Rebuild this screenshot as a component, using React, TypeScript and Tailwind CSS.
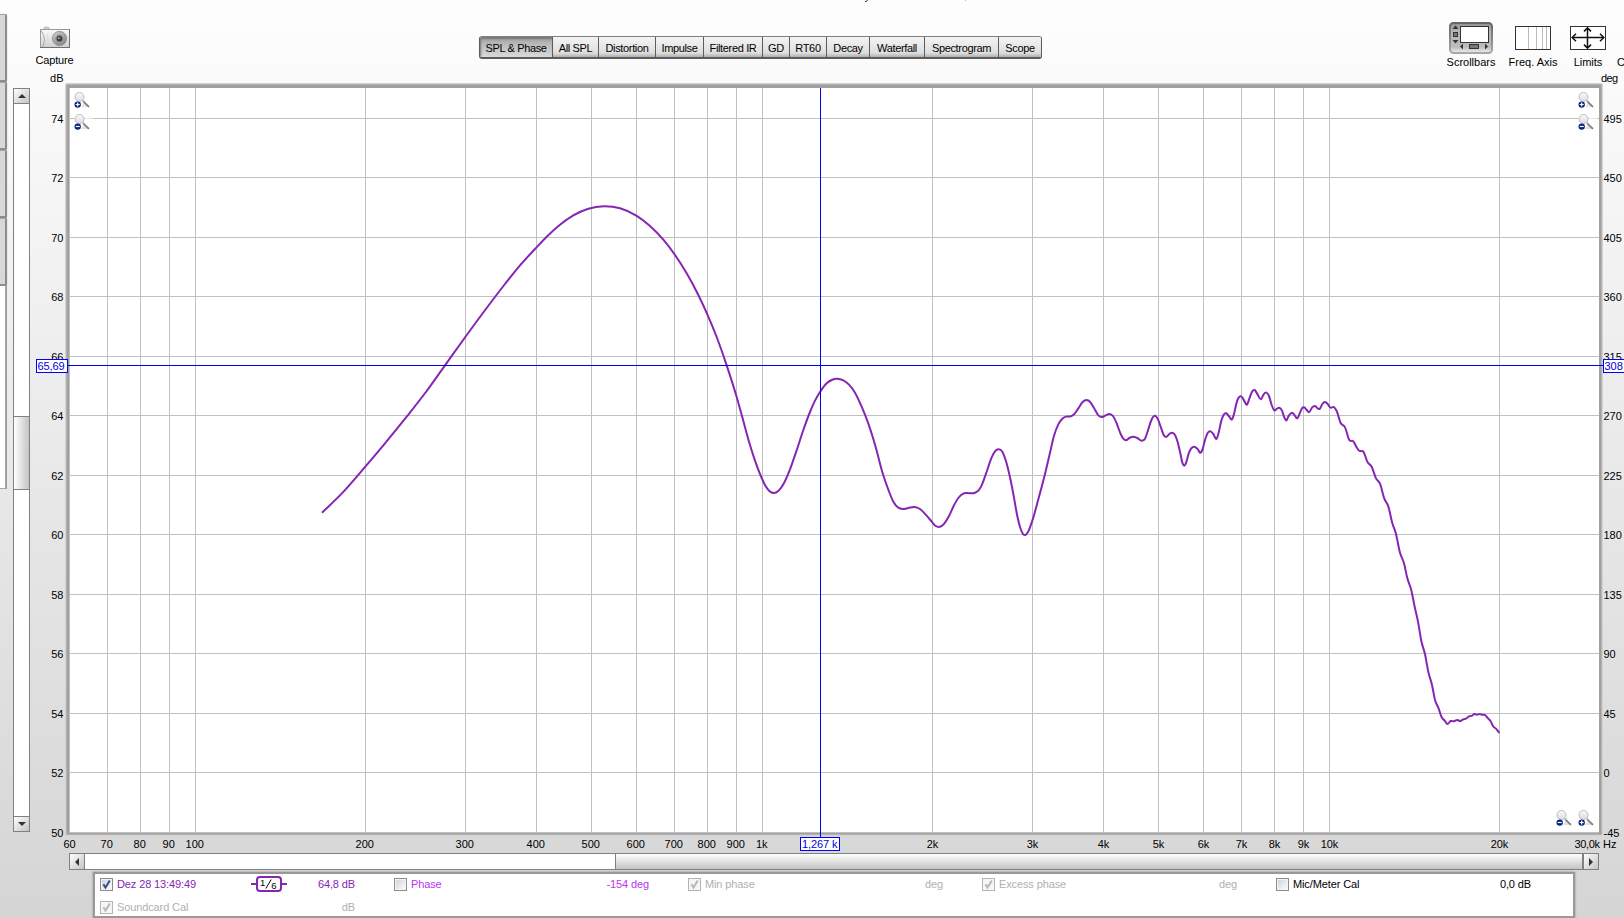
import { clsx } from 'clsx';

const FONT = "font-['Liberation_Sans',Arial,sans-serif]";

const tabs = [
  { label: 'SPL & Phase', width: 'w-[72px]' },
  { label: 'All SPL', width: 'w-[46px]' },
  { label: 'Distortion', width: 'w-[57px]' },
  { label: 'Impulse', width: 'w-[48px]' },
  { label: 'Filtered IR', width: 'w-[59px]' },
  { label: 'GD', width: 'w-[27px]' },
  { label: 'RT60', width: 'w-[37px]' },
  { label: 'Decay', width: 'w-[43px]' },
  { label: 'Waterfall', width: 'w-[55px]' },
  { label: 'Spectrogram', width: 'w-[74px]' },
  { label: 'Scope', width: 'w-[43px]' },
];

// Log frequency axis, 60 Hz to 30 kHz
const freqX = (hz: number) => Math.floor(69.5 + (Math.log(hz / 60) / Math.log(500)) * 1530);
const splY = (db: number) => Math.floor(832 - (db - 50) * 29.75);

const freqs = [
  70, 80, 90, 100, 200, 300, 400, 500, 600, 700, 800, 900, 1000, 2000, 3000, 4000, 5000, 6000, 7000,
  8000, 9000, 10000, 20000,
];
const levels = [74, 72, 70, 68, 66, 64, 62, 60, 58, 56, 54, 52, 50];

const freqLabel = (hz: number) => (hz >= 1000 ? `${hz / 1000}k` : `${hz}`);

// Trace samples in thirds of a pixel, each chunk relative to its own origin
const traceChunks = [
  {
    x: 300,
    y: 180,
    pts: '66,998 125,941 196,860 255,790 320,710 380,633 435,556 496,471 560,384 615,312 655,262 705,207 740,170 780,134 820,106 865,86 912,79 960,85 1009,107 1050,138 1090,179 1123,222 1160,280 1195,345 1222,403 1250,471 1280,556',
  },
  {
    x: 700,
    y: 330,
    pts: '110,201 127,262 150,345 165,392 182,437 195,465 208,483 221,489 235,483 250,463 270,418 290,361 310,300 330,246 345,212 362,183 380,160 395,150 412,146 430,151 447,164 465,188 485,230 505,281 527,351 548,430 565,479 580,515 595,533 608,537 625,534 643,531 660,537 680,557 697,577 707,588 716,591 728,586 745,562 760,530 775,504 790,491 800,489 823,489 835,482 845,466 857,434 875,382 885,364 896,358 907,365 918,394 930,442 942,503 952,559 962,597 970,613 976,615 984,606',
  },
  {
    x: 1020,
    y: 360,
    pts: '37,482 55,418 74,346 90,278 102,227 115,193 127,176 138,170 152,169 163,162 175,145 188,126 200,120 210,125 222,144 235,166 247,171 257,166 268,162 279,168 290,190 302,222 310,236 318,241 328,234 340,230 352,234 365,242 375,236 383,214 393,183 399,171 405,167 414,178 424,206 431,225 438,231 447,223 456,218 465,225 473,246 481,280 487,308 492,317 498,309 505,284 513,266 522,260 532,266 542,278 547,270 555,240 563,219 571,214 580,222 590,236 595,222 604,182 611,164 619,160 628,170 636,178 642,162 650,127 656,113 664,109 672,121 681,134 688,116 696,95 704,90 713,104 723,118 731,103 739,98 747,108 755,135 763,151 771,146 778,143 786,152 792,170 798,181 807,166 816,158 824,166 832,175 840,158 846,145 852,142 860,150 867,157 876,143 885,138 892,144 899,147 907,132 915,126 923,132 930,142 943,142 950,153 962,189 975,202 988,240 1000,244 1010,262 1017,272 1030,275 1043,307',
  },
  {
    x: 1300,
    y: 390,
    pts: '215,230 228,265 240,281 253,326 265,349 277,400 287,428 300,488 312,520 322,565 333,597 345,655 354,695 364,753 375,793 386,850 396,885 405,930 415,953 425,982 434,992 442,1002 452,993 462,994 471,990 481,993 490,988 498,986 507,979 516,977 523,972 531,974 538,972 546,974 555,975 562,983 572,994 579,1008 590,1018 598,1029',
  },
];

const tracePoints = traceChunks.flatMap((c) =>
  c.pts.split(' ').map((p) => {
    const [x, y] = p.split(',').map(Number);
    return [c.x + x / 3, c.y + y / 3];
  })
);

// Slope at a sample: neighbour slopes weighted by distance
const slopes = tracePoints.map((p, i, all) => {
  const prev = all[i - 1];
  const next = all[i + 1];
  if (!prev) return (next[1] - p[1]) / (next[0] - p[0]);
  if (!next) return (p[1] - prev[1]) / (p[0] - prev[0]);
  const h0 = p[0] - prev[0];
  const h1 = next[0] - p[0];
  return (((p[1] - prev[1]) / h0) * h1 + ((next[1] - p[1]) / h1) * h0) / (h0 + h1);
});

const tracePath = tracePoints.reduce((d, p, i, all) => {
  if (i === 0) return `M${p[0]} ${p[1]}`;
  const a = all[i - 1];
  const h = (p[0] - a[0]) / 3;
  const c1 = `${(a[0] + h).toFixed(2)} ${(a[1] + h * slopes[i - 1]).toFixed(2)}`;
  const c2 = `${(p[0] - h).toFixed(2)} ${(p[1] - h * slopes[i]).toFixed(2)}`;
  return `${d}C${c1} ${c2} ${p[0].toFixed(2)} ${p[1].toFixed(2)}`;
}, '');

const CameraIcon = () => (
  <svg width="32" height="24" viewBox="0 0 32 24">
    <defs>
      <linearGradient id="camBody" x1="0" y1="0" x2="0" y2="1">
        <stop offset="0" stopColor="#fafafa" />
        <stop offset="1" stopColor="#cfcfcf" />
      </linearGradient>
      <radialGradient id="camLens" cx="0.4" cy="0.35" r="0.7">
        <stop offset="0" stopColor="#e2e2e2" />
        <stop offset="1" stopColor="#7c7c7c" />
      </radialGradient>
    </defs>
    <path d="M5 4V2.6Q7.5 1 10 2.6V4z" fill="#ddd" stroke="#aaa" strokeWidth="0.7" />
    <rect x="1.5" y="4.5" width="29" height="18" fill="url(#camBody)" stroke="#9a9a9a" />
    <path d="M1 22.5h29.5V4.5" fill="none" stroke="#6e6e6e" />
    <path d="M2 5.5Q8 13.5 3.5 22" fill="none" stroke="#aaa" />
    <path d="M8.5 9v8" stroke="#ddd" />
    <circle cx="20.5" cy="13.5" r="7.2" fill="url(#camLens)" stroke="#949494" strokeWidth="0.8" />
    <circle cx="20.5" cy="13.7" r="4.6" fill="#9a9a9a" />
    <circle cx="20.5" cy="13.7" r="2.9" fill="#3c4046" />
    <circle cx="19.9" cy="13.2" r="0.9" fill="#b8c4cc" />
  </svg>
);

const ScrollbarsIcon = () => (
  <svg width="44" height="32" viewBox="0 0 44 32">
    <defs>
      <linearGradient id="pressed" x1="0" y1="0" x2="0" y2="1">
        <stop offset="0" stopColor="#8f8f8f" />
        <stop offset="0.25" stopColor="#b5b5b5" />
        <stop offset="0.8" stopColor="#bdbdbd" />
        <stop offset="1" stopColor="#f0f0f0" />
      </linearGradient>
      <linearGradient id="pressedEdge" x1="0" y1="0" x2="0" y2="1">
        <stop offset="0" stopColor="#666" />
        <stop offset="1" stopColor="#a8a8a8" />
      </linearGradient>
    </defs>
    <rect x="1" y="1" width="42" height="30" rx="3.5" fill="url(#pressed)" stroke="url(#pressedEdge)" strokeWidth="2" />
    <rect x="11.5" y="4.5" width="28" height="16" fill="#fff" stroke="#333" />
    <path d="M6.5 3.5L9.5 7h-6zM6.5 21.5l3-3.5h-6zM11 24.5l3-3v6zM39 24.5l-3-3v6z" fill="#333" />
    <rect x="4.5" y="10.5" width="4" height="4" fill="#777" stroke="#333" />
    <rect x="20.5" y="22.5" width="9" height="4" fill="#777" stroke="#333" />
  </svg>
);

const FreqAxisIcon = () => (
  <svg width="36" height="24" viewBox="0 0 36 24">
    <rect x="0.5" y="0.5" width="35" height="23" fill="#fff" stroke="#333" />
    <path d="M13.5 1v22M21.5 1v22M27.5 1v22M31.5 1v22" stroke="#bbb" />
  </svg>
);

const LimitsIcon = () => (
  <svg width="36" height="24" viewBox="0 0 36 24">
    <rect x="0.5" y="0.5" width="35" height="23" fill="#fff" stroke="#333" />
    <g fill="none" stroke="#111" strokeWidth="1.5">
      <path d="M2 11.5h32M17.5 2v20" />
      <path d="M6 7.8L2.2 11.5L6 15.2M30 7.8l3.8 3.7L30 15.2M14 5.4l3.5-3.5L21 5.4M14 18.6l3.5 3.5L21 18.6" />
    </g>
  </svg>
);

const Magnifier = ({ x, y, plus }: { x: number; y: number; plus?: boolean }) => (
  <g transform={`translate(${x} ${y})`}>
    <rect x="0" y="0.5" width="19" height="16" fill="#fff" opacity="0.6" />
    <path d="M7 16l8.5.2L10 11z" fill="#e4e4e4" />
    <circle cx="5.5" cy="6" r="4.5" fill="url(#lens)" stroke="#bcbcc2" strokeWidth="1" />
    <path d="M9.2 10.3L15 15.8" stroke="#7c7c7c" strokeWidth="1.7" />
    <path d="M9 9.6l1.6 1.4" stroke="#aaa" strokeWidth="1.8" />
    <circle cx="3.7" cy="13.6" r="3.2" fill="#06267f" />
    <path d={plus ? 'M1.7 13.5h4M3.7 11.5v4' : 'M1.7 13.5h4'} stroke="#fff" strokeWidth="1.2" />
  </g>
);

const Graph = () => (
  <svg width="1594" height="783" viewBox="30 70 1594 783" className={clsx(FONT, 'shrink-0 text-[11px]')}>
    <defs>
      <linearGradient id="lens" x1="0" y1="0" x2="0" y2="1">
        <stop offset="0" stopColor="#fafafa" />
        <stop offset="1" stopColor="#dcdce2" />
      </linearGradient>
    </defs>

    <rect x="65" y="83" width="1538" height="753" rx="2" fill="#d2d2d2" />
    <rect x="66" y="84" width="1536" height="751" rx="1" fill="#b4b4b4" />
    <rect x="67" y="85" width="1534" height="749" fill="#a0a0a0" />
    <rect x="70" y="88" width="1529" height="744" fill="#fff" />

    <g fill="#c0c0c0">
      <rect x="69" y="88" width="1" height="745" />
      {freqs.map((hz) => (
        <rect key={hz} x={freqX(hz)} y="88" width="1" height="744" />
      ))}
      {levels.map((db) => (
        <rect key={db} x="70" y={splY(db)} width="1529" height="1" />
      ))}
    </g>

    {/* Axis labels */}
    <g fill="#000">
      <text x="63.5" y="82" textAnchor="end">dB</text>
      <text x="1601" y="82" textLength="17">deg</text>
      {levels.map((db, i) => (
        <g key={db}>
          <text x="63.5" y={splY(db) + 5} textAnchor="end">{db}</text>
          <text x="1603.5" y={splY(db) + 5}>{495 - i * 45}</text>
        </g>
      ))}
      <g textAnchor="middle">
        <text x="69.5" y="848">60</text>
        {freqs.map((hz) => (
          <text key={hz} x={freqX(hz) + (hz > 1000 ? 0.5 : -0.3)} y="848">{freqLabel(hz)}</text>
        ))}
      </g>
      <text x="1574.5" y="848" textLength="25.5">30,0k</text>
      <text x="1603" y="848">Hz</text>
    </g>

    <path d={tracePath} fill="none" stroke="#8526b3" strokeWidth="2" strokeLinejoin="round" />

    {/* Cursor */}
    <g fill="#0000ee">
      <rect x="68" y="365" width="1535" height="1" />
      <rect x="820" y="88" width="1" height="749" />
    </g>
    <g fill="#fff" stroke="#0000ff">
      <rect x="36.5" y="359.5" width="31" height="13" />
      <rect x="800.5" y="837.5" width="39" height="13" />
      <rect x="1603.5" y="359.5" width="31" height="13" />
    </g>
    <g fill="#0000e0">
      <text x="37.5" y="370" textLength="27">65,69</text>
      <text x="802" y="848" textLength="35.5">1,267 k</text>
      <text x="1604.5" y="370">308</text>
    </g>

    <Magnifier x={74} y={91} plus />
    <Magnifier x={74} y={113} />
    <Magnifier x={1578} y={91} plus />
    <Magnifier x={1578} y={113} />
    <Magnifier x={1556} y={809} />
    <Magnifier x={1578} y={809} plus />
  </svg>
);

const Arrow = ({ dir }: { dir: 'up' | 'down' | 'left' | 'right' }) => {
  const shapes = { up: 'M0 6L4 2l4 4z', down: 'M0 2h8L4 6z', left: 'M6 0v8L2 4z', right: 'M2 0v8l4-4z' };
  return (
    <svg width="8" height="8" viewBox="0 0 8 8">
      <path d={shapes[dir]} fill="#333" />
    </svg>
  );
};

const VScroll = () => (
  <div className="mt-[18px] flex h-[744px] w-[17px] shrink-0 flex-col border border-[#808080] bg-white">
    <div className="flex h-[15px] items-center justify-center border-b border-[#808080] bg-gradient-to-br from-white to-[#c4c4c4]">
      <Arrow dir="up" />
    </div>
    <div className="h-[312px]" />
    <div className="h-[74px] border-y border-[#808080] bg-gradient-to-r from-white to-[#c4c4c4]" />
    <div className="grow" />
    <div className="flex h-[15px] items-center justify-center border-t border-[#808080] bg-gradient-to-br from-white to-[#c4c4c4]">
      <Arrow dir="down" />
    </div>
  </div>
);

const HScroll = () => (
  <div className="ml-[56px] flex h-[17px] w-[1530px] shrink-0 border border-[#808080] bg-white">
    <div className="flex w-[15px] items-center justify-center border-r border-[#808080] bg-gradient-to-br from-white to-[#c4c4c4]">
      <Arrow dir="left" />
    </div>
    <div className="w-[530px]" />
    <div className="grow border-x border-[#808080] bg-gradient-to-b from-white to-[#c4c4c4]" />
    <div className="flex w-[15px] items-center justify-center border-l border-[#808080] bg-gradient-to-br from-white to-[#c4c4c4]">
      <Arrow dir="right" />
    </div>
  </div>
);

interface TraceItemProps {
  name: string;
  value: string;
  color: string;
  checked?: boolean;
  disabled?: boolean;
  smoothing?: boolean;
}

const TraceItem = ({ name, value, color, checked, disabled, smoothing }: TraceItemProps) => (
  <div className={clsx('flex h-4 w-[255px] items-center', color)}>
    <span
      className={clsx(
        'flex size-[13px] shrink-0 items-center justify-center border',
        disabled
          ? 'border-[#b4b4b4] bg-[#f6f6f6]'
          : 'border-[#8c8c8c] bg-gradient-to-br from-[#cdd1d6] to-white shadow-[inset_0_0_0_1px_#f4f4f4]'
      )}
    >
      {checked && (
        <svg width="11" height="11" viewBox="0 0 11 11">
          <path d="M2.4 5.2l2.1 3.4L8.8 1.6" fill="none" stroke={disabled ? '#b8b8b8' : '#334f8d'} strokeWidth="2" />
        </svg>
      )}
    </span>
    <span className="ml-1 whitespace-nowrap">{name}</span>
    {smoothing && (
      <svg width="36" height="16" viewBox="0 0 36 16" className="ml-auto">
        <path d="M0 8h5M31 8h5" stroke="#8526b3" strokeWidth="2" />
        <rect x="6" y="1" width="24" height="14" rx="3" fill="#fff" stroke="#8526b3" strokeWidth="2" />
        <path d="M14.8 12.6L20.2 3.6" stroke="#000" />
        <text x="9" y="10.4" fontSize="9.5" fill="#000">1</text>
        <text x="20.2" y="13" fontSize="9.5" fill="#000">6</text>
      </svg>
    )}
    <span className={clsx('whitespace-nowrap text-right', smoothing ? 'w-[68px]' : 'ml-auto')}>{value}</span>
  </div>
);

const Legend = () => (
  <div className={clsx(FONT, 'ml-[80px] mt-[2px] h-[46px] w-[1482px] border-2 border-[#999] bg-white pl-[5px] pt-[2px] text-[11px] tracking-[-0.12px] shadow-[0_0_2px_#888]')}>
    <div className="flex gap-[39px]">
      <TraceItem name="Dez 28 13:49:49" value="64,8 dB" color="text-[#8526b3]" checked smoothing />
      <TraceItem name="Phase" value="-154 deg" color="text-[#bb33f0]" />
      <TraceItem name="Min phase" value="deg" color="text-[#b0b0b0]" checked disabled />
      <TraceItem name="Excess phase" value="deg" color="text-[#b0b0b0]" checked disabled />
      <TraceItem name="Mic/Meter Cal" value="0,0 dB" color="text-black" />
    </div>
    <div className="mt-[7px] flex">
      <TraceItem name="Soundcard Cal" value="dB" color="text-[#b0b0b0]" checked disabled />
    </div>
  </div>
);

const Header = () => (
  <div className={clsx(FONT, 'flex h-[70px] shrink-0 items-start text-[11px] leading-[13px] text-black')}>
    <div className="ml-[11px] mt-[25px] flex w-[61px] flex-col items-center gap-[5px] tracking-[-0.15px]">
      <CameraIcon />
      <span>Capture</span>
    </div>

    <div className="ml-[394px] flex flex-col">
      {/* Descenders of the title line above */}
      <svg width="562" height="2" viewBox="0 0 562 2">
        <path d="M386 1.5h1.5l1-1.5" fill="none" stroke="#333" />
        <path d="M486.5 0v1" stroke="#bbb" />
      </svg>
      <div className="mt-[34px] flex h-[23px] w-fit overflow-hidden rounded-[3px] border border-[#5c5c5c] border-t-[#808080] border-b-2">
        {tabs.map((tab, i) => (
          <div
            key={tab.label}
            className={clsx(
              'flex items-center justify-center whitespace-nowrap pt-[2px] tracking-[-0.35px]',
              tab.width,
              i > 0 && 'border-l border-[#5c5c5c]',
              i === 0
                ? 'bg-gradient-to-b from-[#a0a0a0] via-[#bcbcbc] via-40% to-[#dadada] shadow-[inset_1px_2px_2px_#777]'
                : 'bg-gradient-to-b from-[#f4f4f4] via-[#dedede] via-80% to-[#b0b0b0]'
            )}
          >
            {tab.label}
          </div>
        ))}
      </div>
    </div>

    <div className="ml-auto mt-[22px] flex gap-1">
      <div className="mr-1 flex w-[52px] flex-col items-center">
        <ScrollbarsIcon />
        <span className="mt-[2px]">Scrollbars</span>
      </div>
      <div className="flex w-[56px] flex-col items-center pt-1">
        <FreqAxisIcon />
        <span className="mt-[6px]">Freq. Axis</span>
      </div>
      <div className="flex w-[46px] flex-col items-center pt-1">
        <LimitsIcon />
        <span className="mt-[6px]">Limits</span>
      </div>
      <span className="mt-[34px] w-[9px] pl-[2px]">C</span>
    </div>
  </div>
);

// Right edges of the measurement list on the far left
const SideStrip = () => (
  <div className="flex h-full w-[13px] shrink-0 flex-col pt-[14px]">
    {[0, 1, 2, 3].map((n) => (
      <div
        key={n}
        className="h-[68px] w-[7px] rounded-r-[2px] border-y border-r-2 border-[#8c8c8c] border-t-[#a5a5a5] border-b-2 bg-[#d8d8d8] shadow-[0_0_1px_#888]"
      />
    ))}
    <div className="h-[203px] w-[6px] border-b border-r border-[#a8a8a8] bg-white shadow-[1px_0_0_#9a9a9a]" />
  </div>
);

export default function App() {
  return (
    <div className="flex h-[918px] w-[1624px] overflow-hidden bg-gradient-to-b from-[#fefefe] to-[#d5d5d5]">
      <SideStrip />
      <div className="flex w-[1611px] flex-col">
        <Header />
        <div className="flex h-[783px] shrink-0">
          <VScroll />
          <Graph />
        </div>
        <HScroll />
        <Legend />
      </div>
    </div>
  );
}
